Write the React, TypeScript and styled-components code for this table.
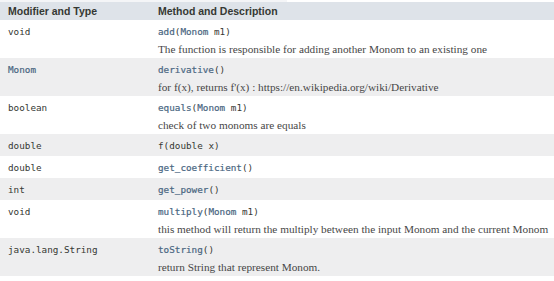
import styled, { createGlobalStyle } from 'styled-components';

const GlobalStyle = createGlobalStyle`
  html, body {
    margin: 0;
    padding: 0;
    background: #ffffff;
  }
`;

interface IMethod {
  type: string;
  typeLink?: boolean;
  name: string;
  params: { type: string; link?: boolean; name?: string }[];
  description?: string;
}

const methods: IMethod[] = [
  {
    type: 'void',
    name: 'add',
    params: [{ type: 'Monom', link: true, name: 'm1' }],
    description: 'The function is responsible for adding another Monom to an existing one',
  },
  {
    type: 'Monom',
    typeLink: true,
    name: 'derivative',
    params: [],
    description: "for f(x), returns f'(x) : https://en.wikipedia.org/wiki/Derivative",
  },
  {
    type: 'boolean',
    name: 'equals',
    params: [{ type: 'Monom', link: true, name: 'm1' }],
    description: 'check of two monoms are equals',
  },
  { type: 'double', name: 'f', params: [{ type: 'double', name: 'x' }] },
  { type: 'double', name: 'get_coefficient', params: [] },
  { type: 'int', name: 'get_power', params: [] },
  {
    type: 'void',
    name: 'multiply',
    params: [{ type: 'Monom', link: true, name: 'm1' }],
    description: 'this method will return the multiply between the input Monom and the current Monom',
  },
  {
    type: 'java.lang.String',
    name: 'toString',
    params: [],
    description: 'return String that represent Monom.',
  },
];

const App = () => {
  return (
    <>
      <GlobalStyle />
      <Summary>
        <CaptionStrip />
        <Table>
          <colgroup>
            <FirstCol />
            <col />
          </colgroup>
          <thead>
            <tr>
              <HeadCell>Modifier and Type</HeadCell>
              <HeadCell>Method and Description</HeadCell>
            </tr>
          </thead>
          <tbody>
            {methods.map((m, i) => {
              // the plain f(double x) row has no link on its name in the shot
              const isLinkedName = m.name !== 'f';
              return (
                <Row key={m.name} $alt={i % 2 === 1}>
                  <Cell>
                    <Signature>
                      <Code $link={m.typeLink}>{m.type}</Code>
                    </Signature>
                  </Cell>
                  <Cell>
                    <Signature>
                      <Code $link={isLinkedName}>{m.name}</Code>
                      <Code>(</Code>
                      {m.params.map((p, j) => (
                        <Code key={j}>
                          <Code $link={p.link}>{p.type}</Code>
                          {p.name ? ` ${p.name}` : ''}
                        </Code>
                      ))}
                      <Code>)</Code>
                    </Signature>
                    {m.description && <Description>{m.description}</Description>}
                  </Cell>
                </Row>
              );
            })}
          </tbody>
        </Table>
      </Summary>
    </>
  );
};

export default App;

const Summary = styled.div`
  width: 554px;
  display: flex;
  flex-direction: column;
`;

const CaptionStrip = styled.div`
  width: 287px;
  height: 2px;
  background: #f4f5f7;
`;

const Table = styled.table`
  width: 100%;
  table-layout: fixed;
  border-collapse: collapse;
  border-spacing: 0;
`;

const FirstCol = styled.col`
  width: 150px;
`;

const HeadCell = styled.th`
  background: #dee3e9;
  color: #353833;
  font-family: 'Liberation Sans', Arial, sans-serif;
  font-weight: bold;
  font-size: 10.5px;
  line-height: 18px;
  text-align: left;
  height: 18px;
  padding: 0 8px;
`;

const Row = styled.tr<{ $alt: boolean }>`
  background: ${(p) => (p.$alt ? '#eeeeef' : '#ffffff')};
`;

const Cell = styled.td`
  vertical-align: top;
  padding: 6px 8px 4px 8px;
  font-size: 9.3px;
  line-height: 12px;
`;

const Signature = styled.div`
  height: 12px;
  line-height: 12px;
  white-space: nowrap;
`;

const Code = styled.span<{ $link?: boolean }>`
  font-family: 'DejaVu Sans Mono', 'Liberation Mono', monospace;
  font-size: 9.3px;
  color: ${(p) => (p.$link ? '#4a6782' : '#353833')};
  -webkit-text-stroke: ${(p) => (p.$link ? '0.2px #4a6782' : '0')};
`;

const Description = styled.div`
  margin: 4px 0 -2px 0;
  font-family: 'Liberation Serif', 'Times New Roman', serif;
  font-size: 11.25px;
  line-height: 14px;
  color: #474747;
  white-space: nowrap;
`;
